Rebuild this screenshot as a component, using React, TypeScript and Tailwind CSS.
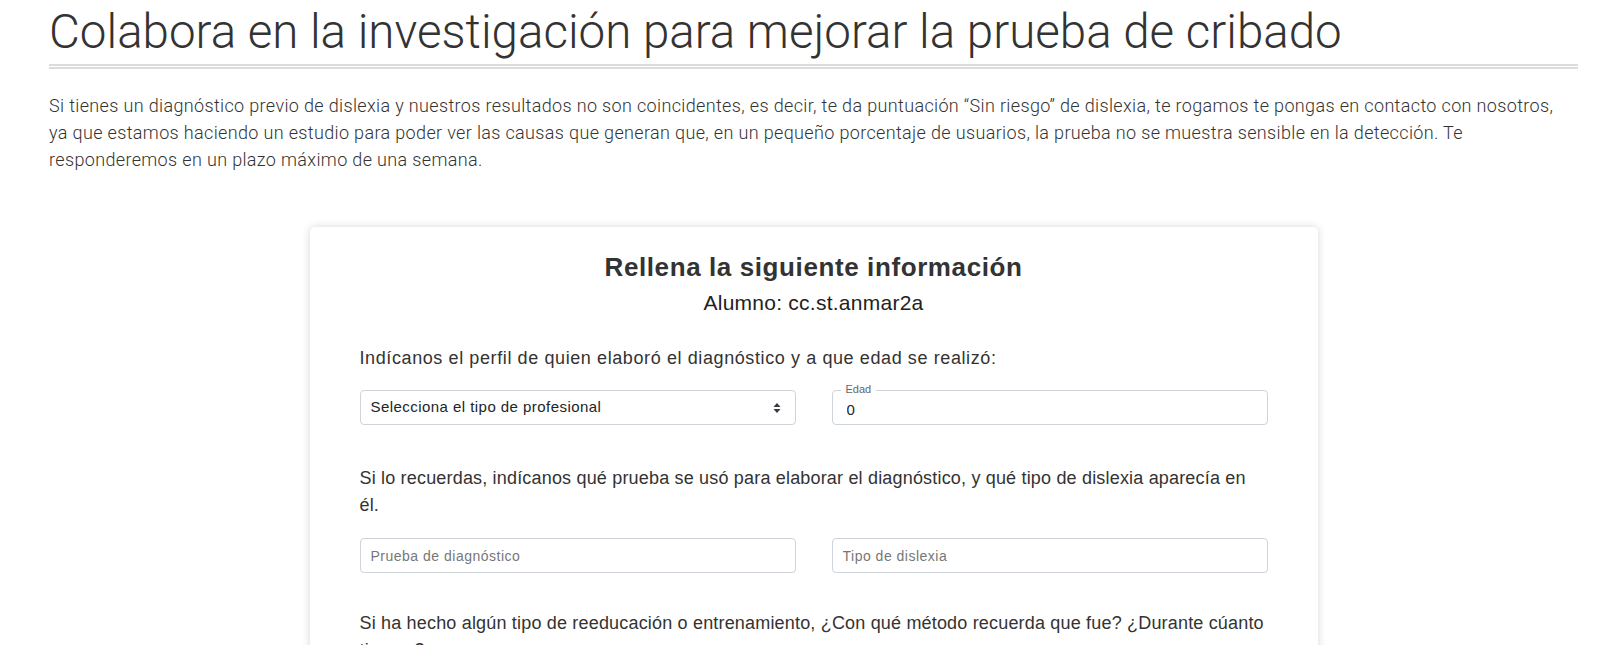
import { ChangeEvent, useState } from 'react';

const LIGHT = "font-['Roboto','Liberation_Sans',Arial,sans-serif] font-light";
const SANS = "font-['Liberation_Sans',Arial,sans-serif]";

function SelectArrows() {
  return (
    <svg width="8" height="12" viewBox="0 0 8 12" className="text-[#343a40]">
      <path d="M4 1 L7.5 5 L0.5 5 Z" fill="currentColor" />
      <path d="M4 11 L7.5 7 L0.5 7 Z" fill="currentColor" />
    </svg>
  );
}

export default function App() {
  const [edad, setEdad] = useState('0');

  return (
    <div className="relative min-h-[645px] overflow-hidden bg-white pl-[49px] pr-[22px] text-[#333]">
      <h1 className={`${LIGHT} pt-[5px] text-[47.5px] leading-[55px] text-[#333]`}>
        Colabora en la investigación para mejorar la prueba de cribado
      </h1>
      <div className="mt-[4px] border-b-[5px] border-double border-[#dcdcdc]" />

      <p className={`${LIGHT} mt-[23px] pr-[16px] text-[18px] leading-[27px] tracking-[0.35px] text-[#333]`}>
        Si tienes un diagnóstico previo de dislexia y nuestros resultados no son coincidentes, es decir, te da
        puntuación “Sin riesgo” de dislexia, te rogamos te pongas en contacto con nosotros, ya que estamos haciendo un
        estudio para poder ver las causas que generan que, en un pequeño porcentaje de usuarios, la prueba no se
        muestra sensible en la detección. Te responderemos en un plazo máximo de una semana.
      </p>

      <div className="mt-[54px] flex justify-center">
        <div className={`${SANS} w-[1008px] rounded-[5px] bg-white px-[50px] pt-[26px] pb-10 shadow-[0_0_9px_rgba(0,0,0,0.16)]`}>
          <h4 className="text-center text-[26px] font-bold leading-[29px] tracking-[0.6px] text-[#333]">
            Rellena la siguiente información
          </h4>
          <div className="mt-[9px] text-center text-[21px] leading-[24px] tracking-[0.25px] text-[#222]">
            Alumno: cc.st.anmar2a
          </div>

          <p className="mt-[30px] text-[18px] leading-[27px] tracking-[0.6px] text-[#333]">
            Indícanos el perfil de quien elaboró el diagnóstico y a que edad se realizó:
          </p>

          <div className="mt-[18px] grid grid-cols-2 gap-[36px]">
            <div className="flex h-[35px] items-center justify-between rounded-[4px] border border-[#ced4da] pl-[10px] pr-[14px] text-[15px] tracking-[0.45px] text-[#212529]">
              <span>Selecciona el tipo de profesional</span>
              <SelectArrows />
            </div>
            <div className="relative">
              <span className="absolute -top-[8px] left-[9px] bg-white px-[5px] text-[11px] leading-[14px] text-[#666]">
                Edad
              </span>
              <input
                value={edad}
                onChange={(e: ChangeEvent<HTMLInputElement>) => setEdad(e.target.value)}
                className="h-[35px] w-full rounded-[4px] border border-[#ced4da] px-[14px] pt-[3px] text-[15px] text-[#212529] outline-none"
              />
            </div>
          </div>

          <p className="mt-[40px] text-[18px] leading-[27px] tracking-[0.18px] text-[#333]">
            Si lo recuerdas, indícanos qué prueba se usó para elaborar el diagnóstico, y qué tipo de dislexia aparecía
            en él.
          </p>

          <div className="mt-[19px] grid grid-cols-2 gap-[36px]">
            <input
              placeholder="Prueba de diagnóstico"
              className="h-[35px] w-full rounded-[4px] border border-[#ced4da] px-[10px] text-[14px] tracking-[0.5px] text-[#212529] outline-none placeholder:text-[#777]"
            />
            <input
              placeholder="Tipo de dislexia"
              className="h-[35px] w-full rounded-[4px] border border-[#ced4da] px-[10px] text-[14px] tracking-[0.5px] text-[#212529] outline-none placeholder:text-[#777]"
            />
          </div>

          <p className="mt-[37px] text-[18px] leading-[27px] tracking-[0.18px] text-[#333]">
            Si ha hecho algún tipo de reeducación o entrenamiento, ¿Con qué método recuerda que fue? ¿Durante cúanto
            tiempo?
          </p>
        </div>
      </div>

      {/* window edge shading at the bottom of the capture */}
      <div className="pointer-events-none absolute inset-x-0 bottom-0 h-[48px] bg-gradient-to-b from-transparent to-black/[0.09]" />
    </div>
  );
}
